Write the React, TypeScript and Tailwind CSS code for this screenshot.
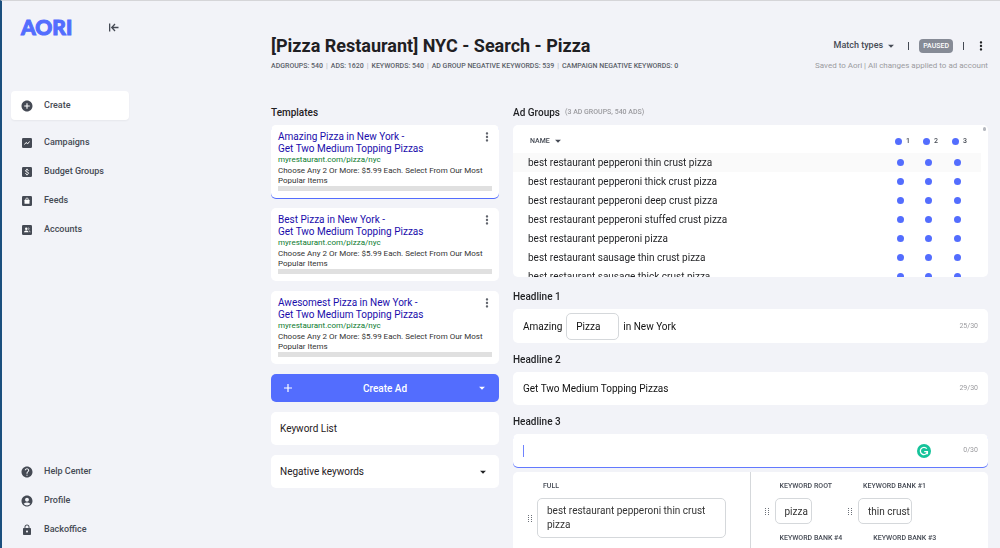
import React from 'react';
import { MdAccountCircle, MdAddCircle, MdArrowDropDown, MdHelp, MdLock, MdMoreVert } from 'react-icons/md';

// --- Data ---

const stats = [
  'ADGROUPS: 540',
  'ADS: 1620',
  'KEYWORDS: 540',
  'AD GROUP NEGATIVE KEYWORDS: 539',
  'CAMPAIGN NEGATIVE KEYWORDS: 0',
];

const templates = [
  { title: 'Amazing Pizza in New York -', active: true },
  { title: 'Best Pizza in New York -', active: false },
  { title: 'Awesomest Pizza in New York -', active: false },
];

const adGroups = [
  'best restaurant pepperoni thin crust pizza',
  'best restaurant pepperoni thick crust pizza',
  'best restaurant pepperoni deep crust pizza',
  'best restaurant pepperoni stuffed crust pizza',
  'best restaurant pepperoni pizza',
  'best restaurant sausage thin crust pizza',
  'best restaurant sausage thick crust pizza',
];

const keywordBanks = [
  { label: 'KEYWORD ROOT', value: 'pizza', width: 'w-[37px]' },
  { label: 'KEYWORD BANK #1', value: 'thin crust', width: 'w-[54px]' },
  { label: 'KEYWORD BANK #4', value: 'pepperoni', width: 'w-[60px]' },
  { label: 'KEYWORD BANK #3', value: 'restaurant', width: 'w-[60px]' },
];

// --- Icons ---

const SquareIcon: React.FC<{ children: React.ReactNode }> = ({ children }) => (
  <svg viewBox="0 0 20 20" className="w-[10px] h-[10px]" fill="none">
    <rect width="20" height="20" rx="2.5" fill="#454a54" />
    {children}
  </svg>
);

const CampaignsIcon = () => (
  <SquareIcon>
    <path d="M5 13l3-4 3.5 2.5L15 7" stroke="#fff" strokeWidth="2" />
  </SquareIcon>
);

const BudgetIcon = () => (
  <SquareIcon>
    <path
      d="M13 7.2C12.6 5.9 11.5 5.4 10 5.4c-1.700 0-2.900.8-2.900 2.200 0 3.200 6 1.600 6 4.800 0 1.500-1.300 2.300-3.100 2.300-1.600 0-2.800-.6-3.200-2M10 3.500v2M10 14.500v2"
      stroke="#fff"
      strokeWidth="2"
    />
  </SquareIcon>
);

const FeedsIcon = () => (
  <SquareIcon>
    <rect x="5" y="7.500" width="10" height="8" rx="1" fill="#fff" />
    <path d="M7.500 8V6.500a2.500 2.500 0 015 0V8" stroke="#fff" strokeWidth="1.500" />
  </SquareIcon>
);

const AccountsIcon = () => (
  <SquareIcon>
    <circle cx="8.500" cy="7.500" r="2.500" fill="#fff" />
    <path d="M4 14.500c0-2.500 2.500-3.500 4.500-3.500s4.500 1 4.500 3.500z" fill="#fff" />
    <path d="M12.500 5.300a2.400 2.400 0 010 4.500M14 11.500c1.500.5 2.200 1.500 2.200 3" stroke="#fff" strokeWidth="1.400" />
  </SquareIcon>
);

const CollapseIcon = () => (
  <svg viewBox="0 0 20 18" className="w-[10px] h-[9px]" fill="none" stroke="#454a54" strokeWidth="2.600">
    <path d="M1.300 1v16M19 9H6M12 2L5.500 9l6.500 7" />
  </svg>
);

const PlusIcon = () => (
  <svg viewBox="0 0 8 8" className="w-2 h-2" stroke="#fff" strokeWidth="1.200">
    <path d="M4 0v8M0 4h8" />
  </svg>
);

const GrammarlyIcon = () => (
  <svg viewBox="0 0 28 28" className="w-[14px] h-[14px]" fill="none">
    <circle cx="14" cy="14" r="14" fill="#15c39a" />
    <path d="M19.500 9.300A7.200 7.200 0 1020.800 16" stroke="#fff" strokeWidth="2.600" />
    <path d="M14.500 15.200h6.300v5.300" stroke="#fff" strokeWidth="2.600" />
  </svg>
);

const Grip = () => (
  <svg viewBox="0 0 4 7" className="w-1 h-[7px] shrink-0" fill="#6b7078">
    <path d="M0 0h1v1H0zM3 0h1v1H3zM0 2h1v1H0zM3 2h1v1H3zM0 4h1v1H0zM3 4h1v1H3zM0 6h1v1H0zM3 6h1v1H3z" />
  </svg>
);

// --- Sidebar ---

const NavItem: React.FC<{ icon: React.ReactNode; label: string }> = ({ icon, label }) => (
  <a href="#" className="flex items-center h-[29px] pl-[10px] gap-[11px] text-[9px] font-medium text-[#454a54]">
    <span className="flex w-3 justify-center">{icon}</span>
    {label}
  </a>
);

const Sidebar = () => (
  <aside className="flex flex-col w-[127px] shrink-0 pl-[9px] pb-1">
    <div className="flex items-center justify-between h-[52px] px-[10px]">
      <a
        href="#"
        className="font-[Lato,sans-serif] text-[21px] leading-5 font-black text-[#536dfe] [-webkit-text-stroke:1px_#536dfe]"
      >
        AORI
      </a>
      <button aria-label="Collapse menu"><CollapseIcon /></button>
    </div>
    <nav className="flex flex-col flex-1 pt-[38px]">
      <a
        href="#"
        className="flex items-center h-[29px] mb-2 pl-[10px] gap-[11px] rounded bg-white shadow-xs text-[9px] font-medium text-[#454a54]"
      >
        <MdAddCircle className="w-3 h-3 shrink-0 scale-110" />
        Create
      </a>
      <NavItem icon={<CampaignsIcon />} label="Campaigns" />
      <NavItem icon={<BudgetIcon />} label="Budget Groups" />
      <NavItem icon={<FeedsIcon />} label="Feeds" />
      <NavItem icon={<AccountsIcon />} label="Accounts" />
      <div className="mt-auto">
        <NavItem icon={<MdHelp className="w-3 h-3 scale-110" />} label="Help Center" />
        <NavItem icon={<MdAccountCircle className="w-3 h-3 scale-110" />} label="Profile" />
        <NavItem icon={<MdLock className="w-3 h-3" />} label="Backoffice" />
      </div>
    </nav>
  </aside>
);

// --- Header ---

const Header = () => (
  <header className="flex justify-between pt-[35px]">
    <div>
      <h1 className="text-[18px] leading-5 font-bold text-[#1f2023]">[Pizza Restaurant] NYC - Search - Pizza</h1>
      <ul className="flex mt-[5px] text-[7px] leading-[10px] font-medium text-[#5a5f68]">
        {stats.map((stat, i) => (
          <li key={stat} className="flex whitespace-nowrap">
            {i > 0 && <span className="px-[3px] text-[#b5b8bf]">|</span>}
            {stat}
          </li>
        ))}
      </ul>
    </div>
    <div className="flex flex-col items-end">
      <div className="flex items-center h-5 text-[9px] font-medium text-[#454a54]">
        <button className="flex items-center gap-px">
          Match types
          <MdArrowDropDown className="w-[14px] h-[14px]" />
        </button>
        <span className="w-px h-2 mx-[10px] bg-[#454a54]" />
        <span className="flex items-center h-[14px] px-1 rounded bg-[#868b96] text-[7px] text-white">PAUSED</span>
        <span className="w-px h-2 mx-[10px] bg-[#454a54]" />
        <button aria-label="Campaign menu"><MdMoreVert className="w-[14px] h-[14px] text-[#1f2023]" /></button>
      </div>
      <p className="mt-1 text-[8px] leading-3 text-[#9b9b9f]">Saved to Aori | All changes applied to ad account</p>
    </div>
  </header>
);

// --- Templates column ---

const TemplateCard: React.FC<{ title: string; active: boolean }> = ({ title, active }) => (
  <article
    className={`relative pt-[6px] px-[7px] pb-[7px] rounded-[5px] bg-white ${
      active ? 'shadow-[0_1px_0_#536dfe]' : ''
    }`}
  >
    <h3 className="text-[10px] leading-3 text-[#1a0dab]">
      {title}
      <br />
      Get Two Medium Topping Pizzas
    </h3>
    <p className="text-[8px] leading-[10px] text-[#0b7a2e]">myrestaurant.com/pizza/nyc</p>
    <p className="mt-px text-[8px] leading-[10px] text-[#333]">
      Choose Any 2 Or More: $5.99 Each. Select From Our Most Popular Items
    </p>
    <div className="h-[5px] bg-[#e0e0e0]" />
    <button aria-label="Template menu" className="absolute top-[5px] right-[5px]">
      <MdMoreVert className="w-[14px] h-[14px] text-[#5f636b]" />
    </button>
  </article>
);

const TemplatesColumn = () => (
  <section className="min-w-0">
    <h2 className="mb-[5px] text-[10px] leading-[15px] font-medium text-[#1f2023]">Templates</h2>
    <div className="flex flex-col gap-[10px]">
      {templates.map((t) => (
        <TemplateCard key={t.title} title={t.title} active={t.active} />
      ))}
      <button className="flex items-center justify-between h-7 px-[10px] rounded-[5px] bg-[#536dfe] text-[10px] font-medium text-white">
        <span className="flex w-[14px] justify-center"><PlusIcon /></span>
        Create Ad
        <MdArrowDropDown className="w-[14px] h-[14px]" />
      </button>
      <button className="flex items-center h-[33px] px-[9px] rounded-[5px] bg-white text-[10px] text-[#1f2023]">Keyword List</button>
      <button className="flex items-center justify-between h-[33px] px-[9px] rounded-[5px] bg-white text-[10px] text-[#1f2023]">
        Negative keywords
        <MdArrowDropDown className="w-[14px] h-[14px]" />
      </button>
    </div>
  </section>
);

// --- Editor column ---

const Dot = () => <span className="block w-[7px] h-[7px] rounded-full bg-[#536dfe]" />;

const AdGroupsTable = () => (
  <div className="flex h-[152px] overflow-y-auto [scrollbar-width:none] rounded-[5px] bg-white">
    <table className="flex-1 self-start table-fixed w-full text-left">
      <colgroup>
        <col />
        <col className="w-[28px]" />
        <col className="w-[29px]" />
        <col className="w-[31px]" />
      </colgroup>
      <thead>
        <tr className="h-7 text-[7px] font-medium text-[#454a54]">
          <th className="pl-[17px] pt-1 font-medium">
            <button className="flex items-center gap-px">
              NAME
              <MdArrowDropDown className="w-[14px] h-[14px]" />
            </button>
          </th>
          {[1, 2, 3].map((n) => (
            <th key={n} className="pl-[2px] pt-1 font-medium">
              <span className="flex items-center gap-1"><Dot />{n}</span>
            </th>
          ))}
        </tr>
      </thead>
      <tbody>
        {adGroups.map((name, i) => (
          <tr key={name} className={`h-[19px] text-[10px] leading-[19px] text-[#1f2023] ${i === 0 ? 'bg-[#fafafa]' : ''}`}>
            <td className="pl-[15px]">{name}</td>
            <td className="pl-1"><Dot /></td>
            <td className="pl-1"><Dot /></td>
            <td className="pl-1"><Dot /></td>
          </tr>
        ))}
      </tbody>
    </table>
    <div className="w-[7px] shrink-0 pt-[2px] pl-[2px]">
      <div className="w-[3px] h-1 rounded-full bg-[#b5b8bf]" />
    </div>
  </div>
);

const Label: React.FC<{ htmlFor: string; children: React.ReactNode }> = ({ htmlFor, children }) => (
  <label htmlFor={htmlFor} className="block mt-[10px] mb-[5px] text-[10px] leading-[14px] font-medium text-[#1f2023]">
    {children}
  </label>
);

const Counter: React.FC<{ children: React.ReactNode }> = ({ children }) => (
  <span className="ml-auto text-[7px] text-[#9b9b9f]">{children}</span>
);

const Headlines = () => (
  <div className="pt-[3px] text-[10px] text-[#111]">
    <Label htmlFor="headline1">Headline 1</Label>
    <div className="flex items-center h-[34px] px-[10px] rounded-[5px] bg-white">
      <span>Amazing</span>
      <input
        id="headline1"
        defaultValue="Pizza"
        className="w-[53px] h-[27px] mx-1 px-[9px] border border-[#d5d8db] rounded-[5px] outline-none"
      />
      <span>in New York</span>
      <Counter>25/30</Counter>
    </div>
    <Label htmlFor="headline2">Headline 2</Label>
    <div className="flex items-center h-[33px] px-[10px] rounded-[5px] bg-white">
      <input id="headline2" defaultValue="Get Two Medium Topping Pizzas" className="flex-1 min-w-0 outline-none" />
      <Counter>29/30</Counter>
    </div>
    <Label htmlFor="headline3">Headline 3</Label>
    <div className="flex items-center h-[33px] px-[10px] rounded-[5px] bg-white shadow-[0_1px_0_#6379fe]">
      <span className="w-px h-3 bg-[#6f83fe]" />
      <input id="headline3" className="flex-1 min-w-0 outline-none" />
      <span className="mr-8"><GrammarlyIcon /></span>
      <Counter>0/30</Counter>
    </div>
  </div>
);

const KeywordPanel = () => (
  <div className="flex mt-[5px] rounded-[5px] bg-white text-[#454a54]">
    <div className="w-1/2 pt-[9px] pl-[15px] pr-[24px] border-r border-[#d5d8db]">
      <label htmlFor="full" className="block pl-[15px] text-[7px] leading-[10px] font-medium">FULL</label>
      <div className="flex items-center gap-[5px] mt-[7px]">
        <Grip />
        <textarea
          id="full"
          defaultValue="best restaurant pepperoni thin crust pizza"
          className="flex-1 min-w-0 h-10 px-[9px] py-[5px] border border-[#d5d8db] rounded-[5px] text-[10px] leading-[14px] text-[#333] resize-none outline-none"
        />
      </div>
    </div>
    <div className="flex flex-1 flex-wrap content-start gap-x-4 gap-y-[9px] pt-[9px] pl-[14px]">
      {keywordBanks.map((bank) => (
        <div key={bank.label}>
          <label htmlFor={bank.label} className="block pl-[15px] text-[7px] leading-[10px] font-medium">{bank.label}</label>
          <div className="flex items-center gap-[6px] mt-[7px]">
            <Grip />
            <input
              id={bank.label}
              defaultValue={bank.value}
              className={`h-[26px] pl-[9px] border border-[#d5d8db] rounded-[5px] text-[10px] text-[#333] outline-none ${bank.width}`}
            />
          </div>
        </div>
      ))}
    </div>
  </div>
);

export default function App() {
  return (
    <div className="flex h-screen overflow-hidden border-t border-l-2 border-t-[#d5d5d8] border-l-[#1b4f7e] bg-[#f2f3f8] font-[Roboto,sans-serif]">
      <Sidebar />
      <main className="flex-1 min-w-0 ml-[142px] pr-3">
        <Header />
        <div className="grid grid-cols-[12fr_25fr] gap-[14px] mt-[33px]">
          <TemplatesColumn />
          <section className="min-w-0">
            <h2 className="flex items-center gap-[5px] mb-[5px] text-[10px] leading-[15px] font-medium text-[#1f2023]">
              Ad Groups
              <span className="text-[7px] text-[#9b9b9f]">(3 AD GROUPS, 540 ADS)</span>
            </h2>
            <AdGroupsTable />
            <Headlines />
            <KeywordPanel />
          </section>
        </div>
      </main>
    </div>
  );
}
